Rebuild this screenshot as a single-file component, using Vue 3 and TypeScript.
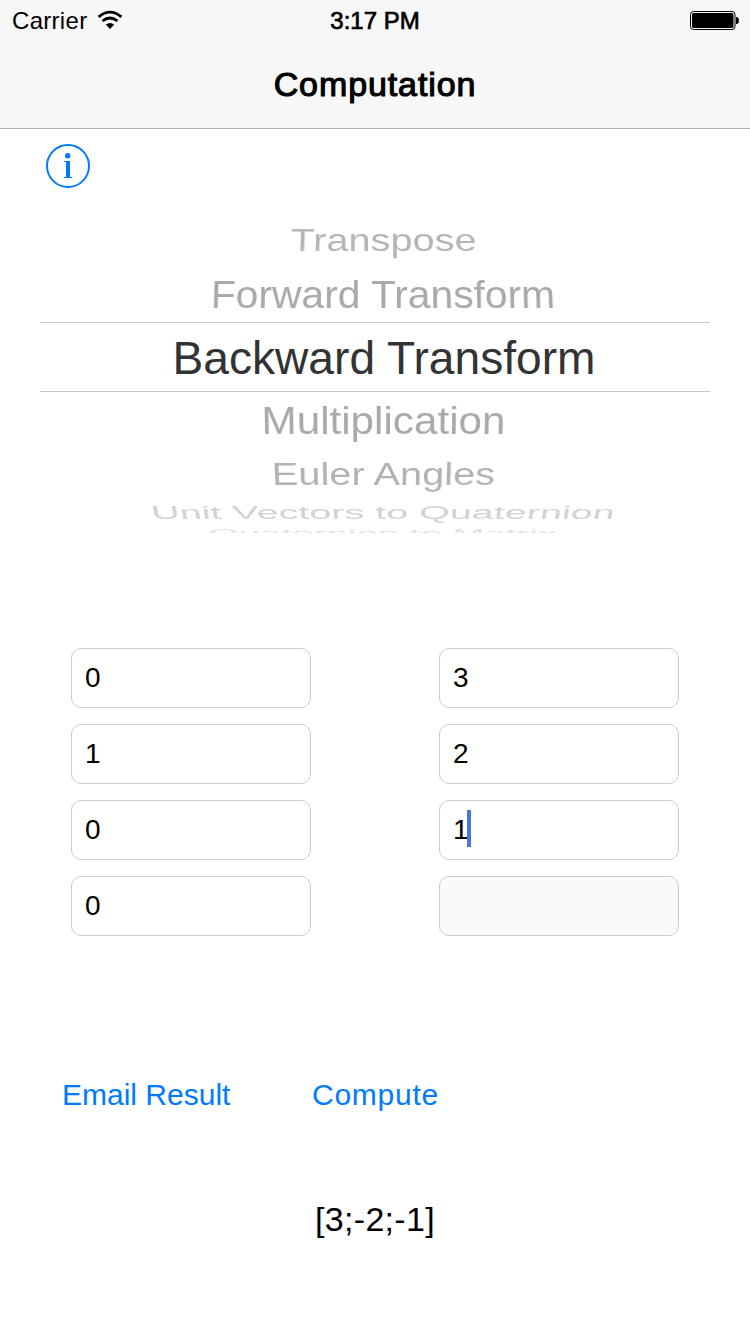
<script setup lang="ts">
interface PickerRow {
  label: string
  height: number
  baseline: number
  size: number
  width: number
  center: number
  taper: number
  color: string
}

interface Field {
  value: string
  focused?: boolean
  disabled?: boolean
}

const above: PickerRow[] = [
  { label: 'Transpose', height: 50, baseline: 37, size: 30.5, width: 186, center: 343.5, taper: -0.0005, color: '#b5b5b5' },
  { label: 'Forward Transform', height: 58, baseline: 44, size: 39.5, width: 344, center: 343, taper: -0.0002, color: '#a9a9a9' },
]
const selected: PickerRow[] = [
  { label: 'Backward Transform', height: 68, baseline: 51, size: 47, width: 423, center: 344, taper: 0, color: '#333333' },
]
const below: PickerRow[] = [
  { label: 'Multiplication', height: 57, baseline: 42, size: 39.5, width: 244, center: 343.5, taper: 0.0002, color: '#a9a9a9' },
  { label: 'Euler Angles', height: 48, baseline: 36, size: 31, width: 223.5, center: 343.5, taper: 0.0004, color: '#b2b2b2' },
  { label: 'Unit Vectors to Quaternion', height: 30, baseline: 22.5, size: 19, width: 464, center: 343, taper: 0.0009, color: '#d2d2d2' },
  { label: 'Quaternion to Matrix', height: 6, baseline: 10, size: 10.5, width: 349, center: 343, taper: 0.0012, color: '#e0e0e0' },
]
const groups = [
  { name: 'above', rows: above },
  { name: 'selected', rows: selected },
  { name: 'below', rows: below },
]

const warp = (row: PickerRow) => ({
  transform: row.taper ? `matrix3d(1,0,0,0, 0,1,0,${row.taper}, 0,0,1,0, 0,0,0,1)` : 'none',
})

const columns: Field[][] = [
  [{ value: '0' }, { value: '1' }, { value: '0' }, { value: '0' }],
  [{ value: '3' }, { value: '2' }, { value: '1', focused: true }, { value: '', disabled: true }],
]
</script>

<template>
  <main class="screen">
    <header class="top">
      <div class="status">
        <div class="network">
          <span class="carrier">Carrier</span>
          <svg class="wifi" width="26" height="20" viewBox="0 0 26 20">
            <path d="M1.6 6.9 Q13 -2.6 24.4 6.9" fill="none" stroke="#000" stroke-width="2.8" />
            <path d="M5.5 11 Q13 5 20.5 11" fill="none" stroke="#000" stroke-width="2.8" />
            <path d="M8.8 14.6 Q13 11.2 17.2 14.6 L13 18.9 Z" fill="#000" />
          </svg>
        </div>
        <span class="time">3:17 PM</span>
        <svg class="battery" width="50" height="20" viewBox="0 0 50 20">
          <rect x="0.5" y="1.5" width="44.5" height="18" rx="3" fill="none" stroke="#000" />
          <rect x="2" y="3" width="41.5" height="15" rx="1.5" fill="#000" />
          <path d="M46 7 H47 Q49 7.5 49 10.5 Q49 13.5 47 14 H46 Z" fill="#000" />
        </svg>
      </div>
      <h1 class="title">Computation</h1>
    </header>

    <svg class="info" width="44" height="44" viewBox="0 0 44 44">
      <circle cx="22" cy="22" r="21" fill="none" stroke="#007aff" stroke-width="2" />
      <circle cx="21.7" cy="11.7" r="2.7" fill="#007aff" />
      <path d="M18 17 H24 V33 H26 V34 H18 V33 H20 V18 H18 Z" fill="#007aff" />
    </svg>

    <section class="picker">
      <div v-for="group in groups" :key="group.name" :class="group.name">
        <div v-for="row in group.rows" :key="row.label" class="row">
          <svg class="label" width="670" :height="row.height" :style="warp(row)">
            <text
              :x="row.center"
              :y="row.baseline"
              :font-size="row.size"
              :textLength="row.width"
              :fill="row.color"
              text-anchor="middle"
              lengthAdjust="spacingAndGlyphs"
            >{{ row.label }}</text>
          </svg>
        </div>
      </div>
    </section>

    <section class="fields">
      <div v-for="(column, c) in columns" :key="c" class="column">
        <div v-for="(field, f) in column" :key="f" class="field" :class="{ disabled: field.disabled }">
          <span>{{ field.value }}</span><i v-if="field.focused" class="caret"></i>
        </div>
      </div>
    </section>

    <div class="actions">
      <a class="email">Email Result</a>
      <a class="compute">Compute</a>
    </div>
    <output class="result">[3;-2;-1]</output>
  </main>
</template>

<style>
body {
  background: #fff;
}
</style>

<style scoped>
.screen {
  box-sizing: border-box;
  width: 750px;
  height: 1334px;
  overflow: hidden;
  background: #fff;
  color: #000;
  font-family: "Liberation Sans", Arial, sans-serif;
}
.top {
  box-sizing: border-box;
  height: 129px;
  background: #f7f7f7;
  border-bottom: 1px solid #b2b2b2;
}
.status {
  display: grid;
  grid-template-columns: 1fr auto 1fr;
  height: 40px;
  align-items: start;
  font-size: 24px;
  line-height: 28px;
}
.network {
  display: flex;
  padding: 7px 0 0 12px;
}
.carrier {
  width: 76px;
  letter-spacing: 0.3px;
}
.wifi {
  margin: 3px 0 0 9px;
}
.time {
  padding-top: 7px;
  letter-spacing: 0;
  -webkit-text-stroke: 0.7px #000;
}
.battery {
  justify-self: end;
  margin: 10px 10px 0 0;
}
.title {
  margin: 0;
  padding-top: 24px;
  font-size: 34px;
  line-height: 40px;
  font-weight: 400;
  letter-spacing: 0.9px;
  text-align: center;
  -webkit-text-stroke: 1.1px #000;
}
.info {
  display: block;
  margin: 15px 0 0 46px;
}
.picker {
  margin: 26px 40px 0;
}
.selected {
  border-top: 1px solid #c8c8c8;
  border-bottom: 1px solid #c8c8c8;
}
.below {
  overflow: hidden;
}
.label {
  display: block;
  overflow: visible;
}
.fields {
  display: flex;
  gap: 128px;
  margin: 115px 71px 0;
}
.column {
  display: flex;
  flex-direction: column;
  gap: 16px;
}
.field {
  box-sizing: border-box;
  display: flex;
  align-items: center;
  width: 240px;
  height: 60px;
  padding-left: 13px;
  border: 1px solid #cccccc;
  border-radius: 10px;
  font-size: 28px;
  line-height: 32px;
}
.disabled {
  background: #fafafa;
}
.caret {
  width: 4px;
  height: 37px;
  margin: 0 0 4px -2px;
  background: #4b73ee;
}
.actions {
  display: flex;
  margin: 141px 0 0 62px;
  color: #007aff;
  font-size: 30px;
  line-height: 36px;
}
.email {
  width: 250px;
  letter-spacing: 0;
}
.compute {
  letter-spacing: 0.75px;
}
.result {
  display: block;
  margin-top: 86px;
  font-size: 34px;
  line-height: 40px;
  letter-spacing: 0.3px;
  text-align: center;
}
</style>
